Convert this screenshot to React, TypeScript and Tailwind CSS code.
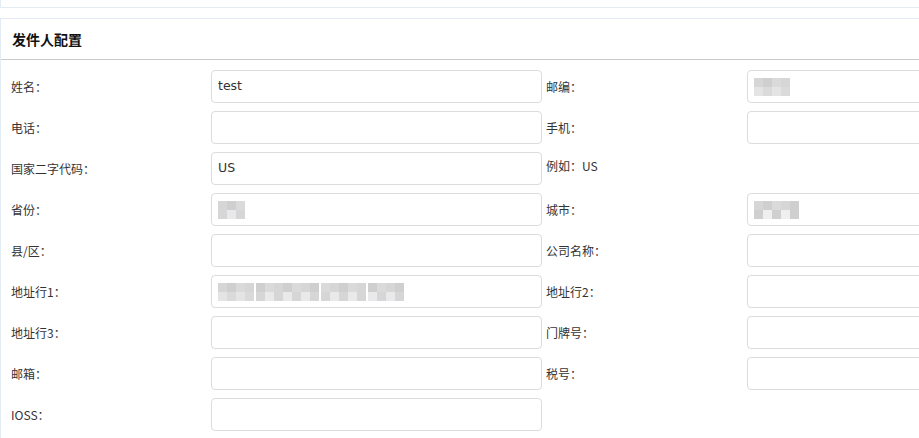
import React from 'react';

type Field = {
  label: string;
  value?: string;
  mosaic?: number[];
  hint?: string;
};

// 每行左右两组：标签 + 输入框
const rows: [Field, Field | null][] = [
  [{ label: '姓名：', value: 'test' }, { label: '邮编：', mosaic: [38] }],
  [{ label: '电话：' }, { label: '手机：' }],
  [{ label: '国家二字代码：', value: 'US' }, { label: '例如：US', hint: 'hint' }],
  [{ label: '省份：', mosaic: [30] }, { label: '城市：', mosaic: [44] }],
  [{ label: '县/区：' }, { label: '公司名称：' }],
  [{ label: '地址行1：', mosaic: [40, 64, 44, 36] }, { label: '地址行2：' }],
  [{ label: '地址行3：' }, { label: '门牌号：' }],
  [{ label: '邮箱：' }, { label: '税号：' }],
  [{ label: 'IOSS：' }, null],
];

/** 打码后的内容：一排灰色小方块 */
function Mosaic({ widths }: { widths: number[] }) {
  const shades = ['bg-[#d6d6d6]', 'bg-[#e4e4e4]', 'bg-[#cfcfcf]', 'bg-[#e9e9eb]', 'bg-[#dadada]', 'bg-[#efefef]'];
  let k = 0;
  return (
    <div className="flex items-center gap-[2px] blur-[0.6px]">
      {widths.map((w, i) => {
        const cells = Math.round(w / 9);
        return (
          <div key={i} className="flex flex-col">
            <div className="flex">
              {Array.from({ length: cells }).map((_, j) => (
                <div key={j} className={`w-[9px] h-[9px] ${shades[(k++ + j) % shades.length]}`} />
              ))}
            </div>
            <div className="flex">
              {Array.from({ length: cells }).map((_, j) => (
                <div key={j} className={`w-[9px] h-[9px] ${shades[(k++ + j * 2 + 3) % shades.length]}`} />
              ))}
            </div>
          </div>
        );
      })}
    </div>
  );
}

function Input({ field }: { field: Field }) {
  return (
    <div className="w-[331px] h-[33px] shrink-0 border border-[#dcdcdc] rounded-[4px] bg-white flex items-center pl-[6px] text-[12.5px] text-[#333] font-['DejaVu_Sans',sans-serif]">
      {field.value}
      {field.mosaic && <Mosaic widths={field.mosaic} />}
    </div>
  );
}

export default function App() {
  return (
    <div className="w-[919px] h-[438px] overflow-hidden bg-white font-['Noto_Sans_CJK_SC','Noto_Sans',sans-serif] text-[#333]">
      <div className="h-2 border-l border-b border-[#e3ecf4]" />
      <div className="mt-[10px] border-l border-t border-[#e3ecf4] min-h-[420px] w-[1100px]">
        <div className="h-[40px] flex items-center pl-[11px] text-[14px] font-bold text-[#111]">发件人配置</div>
        <div className="h-px bg-[#c9c9c9]" />
        <div className="pt-[10px] flex flex-col gap-[8px]">
          {rows.map(([l, r], i) => (
            <div key={i} className="flex items-center text-[12px] whitespace-nowrap">
              <div className="w-[210px] shrink-0 pl-[10px]">{l.label}</div>
              <Input field={l} />
              {r && (
                <>
                  <div className={`w-[205px] shrink-0 pl-[4px] ${r.hint ? 'self-start pt-[5px]' : ''}`}>{r.label}</div>
                  {!r.hint && <Input field={r} />}
                </>
              )}
            </div>
          ))}
        </div>
      </div>
    </div>
  );
}
